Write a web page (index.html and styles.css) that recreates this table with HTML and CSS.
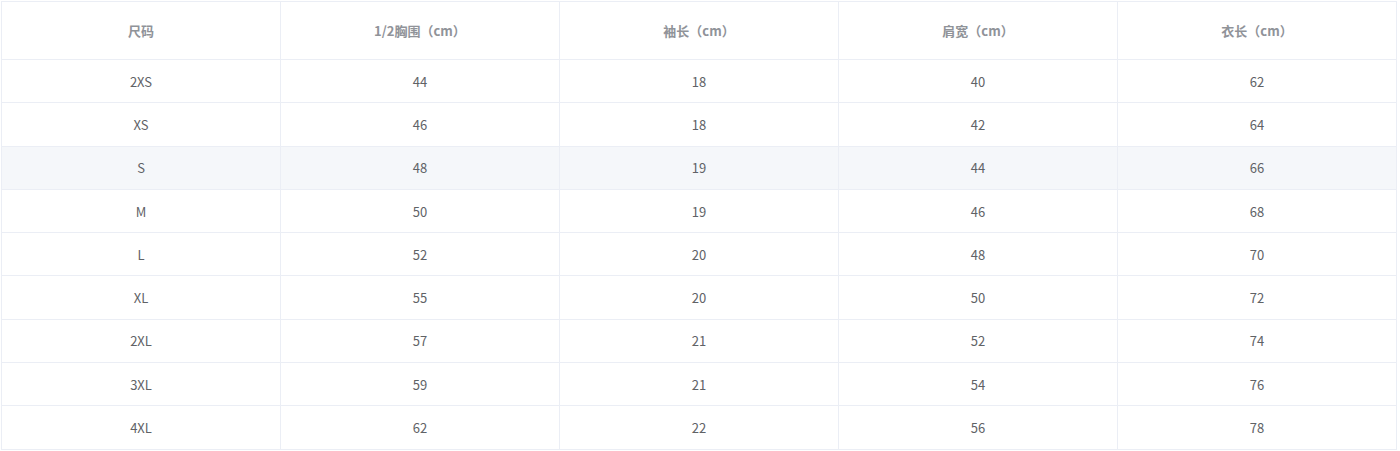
FILE: index.html
```html
<!DOCTYPE html>
<html lang="zh">
<head>
<meta charset="utf-8">
<link rel="stylesheet" href="styles.css">
</head>
<body>
<div class="wrap">
<table class="size-table">
<thead>
<tr><th>尺码</th><th>1/2胸围（cm）</th><th>袖长（cm）</th><th>肩宽（cm）</th><th>衣长（cm）</th></tr>
</thead>
<tbody>
<tr><td>2XS</td><td>44</td><td>18</td><td>40</td><td>62</td></tr>
<tr><td>XS</td><td>46</td><td>18</td><td>42</td><td>64</td></tr>
<tr class="hl"><td>S</td><td>48</td><td>19</td><td>44</td><td>66</td></tr>
<tr><td>M</td><td>50</td><td>19</td><td>46</td><td>68</td></tr>
<tr><td>L</td><td>52</td><td>20</td><td>48</td><td>70</td></tr>
<tr><td>XL</td><td>55</td><td>20</td><td>50</td><td>72</td></tr>
<tr><td>2XL</td><td>57</td><td>21</td><td>52</td><td>74</td></tr>
<tr><td>3XL</td><td>59</td><td>21</td><td>54</td><td>76</td></tr>
<tr><td>4XL</td><td>62</td><td>22</td><td>56</td><td>78</td></tr>
</tbody>
</table>
</div>
</body>
</html>
```

FILE: styles.css
```css
html, body {
  margin: 0;
  padding: 0;
  background: #ffffff;
}
.wrap {
  padding: 1px 0 0 1px;
}
.size-table {
  width: 1396px;
  border-collapse: collapse;
  table-layout: fixed;
  font-family: "Noto Sans CJK SC", "Open Sans", sans-serif;
  font-size: 13px;
}
.size-table th,
.size-table td {
  border: 1px solid #ebeef5;
  text-align: center;
  padding: 0;
}
.size-table th {
  height: 57px;
  color: #909399;
  font-weight: 700;
}
.size-table td {
  height: 42.3px;
  color: #606266;
}
.size-table tr.hl td {
  background: #f5f7fa;
}
```
